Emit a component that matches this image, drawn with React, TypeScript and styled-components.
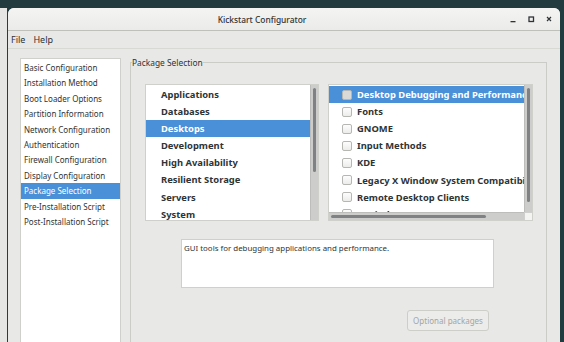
import * as React from 'react'
import styled, { createGlobalStyle, css } from 'styled-components'

const GlobalStyle = createGlobalStyle`
  html, body { margin: 0; padding: 0; height: 100%; overflow: hidden; }
  body { background: #223b3f; font-family: "Noto Sans", "DejaVu Sans", sans-serif; }
  #root { height: 100%; }
`

const Desktop = styled.div`
  display: flex;
  height: 342px;
  padding-top: 8px;
  box-sizing: border-box;
`

const BackWindow = styled.div`
  width: 7px;
  background: #e6e6e4;
  border-right: 1px solid #2d3b3d;
`

const Window = styled.div`
  flex: 1;
  display: flex;
  flex-direction: column;
  background: #e8e8e7;
  border-top-left-radius: 6px;
  border-top-right-radius: 6px;
  margin-right: 4px;
  overflow: hidden;
`

const TitleBar = styled.div`
  height: 22px;
  flex: none;
  display: flex;
  align-items: center;
  justify-content: center;
  position: relative;
  padding-right: 44px;
  background: linear-gradient(#f4f4f3, #ebebea);
  border-bottom: 1px solid #bfbfbc;
  font-size: 8.4px;
  font-weight: 500;
  color: #2e3436;
`

const Controls = styled.div`
  position: absolute;
  right: 6px;
  top: 0;
  height: 22px;
  display: flex;
  align-items: center;
  gap: 8px;
`

const ControlButton = styled.div`
  width: 10px;
  height: 10px;
  display: flex;
  align-items: center;
  justify-content: center;
`

const MenuBar = styled.div`
  height: 17px;
  flex: none;
  display: flex;
  align-items: center;
  gap: 8px;
  padding-left: 3px;
  font-size: 9px;
  color: #2e3436;
  border-bottom: 1px solid #d8d8d5;
`

const Body = styled.div`
  flex: 1;
  display: flex;
  padding: 9px 0 0 12px;
  min-height: 0;
`

const NavList = styled.div`
  width: 99px;
  flex: none;
  background: #fff;
  border: 1px solid #cfcfcc;
  border-bottom: none;
  padding-top: 1px;
  display: flex;
  flex-direction: column;
`

const NavItem = styled.div<{ $selected?: boolean }>`
  height: 15.4px;
  line-height: 15.4px;
  padding-left: 3px;
  font-size: 8px;
  color: #2e3436;
  white-space: nowrap;
  ${(p) =>
    p.$selected &&
    css`
      background: #4a90d9;
      color: #fff;
    `}
`

const Frame = styled.fieldset`
  margin: -1px 13px 0 9px;
  padding: 16px 0 0 14px;
  flex: 1;
  border: 1px solid #cbcbc8;
  border-bottom: none;
  min-width: 0;
  display: flex;
  flex-direction: column;
`

const FrameLabel = styled.legend`
  padding: 0;
  margin-left: -13px;
  font-size: 8.4px;
  color: #2e3436;
`

const ListsRow = styled.div`
  display: flex;
  gap: 9px;
`

const ListBox = styled.div<{ $width: number }>`
  width: ${(p) => p.$width}px;
  height: 137px;
  box-sizing: border-box;
  background: #fff;
  border: 1px solid #cfcfcc;
  position: relative;
  overflow: hidden;
`

const Rows = styled.div`
  padding-top: 1px;
  display: flex;
  flex-direction: column;
`

const GroupRow = styled.div<{ $selected?: boolean }>`
  height: 17.1px;
  line-height: 17.1px;
  padding-left: 15px;
  font-size: 9.4px;
  font-weight: 700;
  color: #2e3436;
  white-space: nowrap;
  margin-right: 7px;
  ${(p) =>
    p.$selected &&
    css`
      background: #4a90d9;
      color: #fff;
    `}
`

const PackageRow = styled.div<{ $selected?: boolean }>`
  height: 17.1px;
  display: flex;
  align-items: center;
  gap: 5px;
  padding-left: 13px;
  margin-right: 7px;
  font-size: 9.4px;
  font-weight: 700;
  color: #2e3436;
  white-space: nowrap;
  overflow: hidden;
  ${(p) =>
    p.$selected &&
    css`
      background: #4a90d9;
      color: #fff;
    `}
`

const CheckBox = styled.span<{ $selected?: boolean }>`
  width: 8px;
  height: 8px;
  flex: none;
  border: 1px solid #b6b6b3;
  border-radius: 2px;
  background: ${(p) => (p.$selected ? '#d9d9d7' : 'linear-gradient(#fdfdfd, #ececeb)')};
`

const VScroll = styled.div`
  position: absolute;
  top: 0;
  right: 0;
  bottom: 0;
  width: 7px;
  background: #cdcdcb;
  border-left: 1px solid #bdbdbb;
`

const HScroll = styled.div`
  position: absolute;
  left: 0;
  right: 8px;
  bottom: 0;
  height: 7px;
  background: #cdcdcb;
  border-top: 1px solid #bdbdbb;
`

const Corner = styled.div`
  position: absolute;
  right: 0;
  bottom: 0;
  width: 8px;
  height: 8px;
  background: #f4f4f3;
  border-left: 1px solid #d0d0ce;
  border-top: 1px solid #d0d0ce;
  box-sizing: border-box;
`

const Thumb = styled.div<{ $vertical?: boolean }>`
  position: absolute;
  background: #7f8283;
  border-radius: 2px;
  ${(p) =>
    p.$vertical
      ? css`
          left: 2px;
          width: 3px;
        `
      : css`
          top: 2px;
          height: 3px;
        `}
`

const Description = styled.div`
  margin: 18px 0 0 36px;
  width: 313px;
  height: 49px;
  box-sizing: border-box;
  background: #fff;
  border: 1px solid #cfcfcc;
  padding: 3px 2px;
  font-size: 7.9px;
  color: #2e3436;
`

const ButtonRow = styled.div`
  display: flex;
  margin: 22px 0 0 262px;
`

const Button = styled.button`
  width: 82px;
  height: 21px;
  padding: 0;
  border: 1px solid #cdcdca;
  border-radius: 3px;
  background: #ececeb;
  font-family: inherit;
  font-size: 8px;
  color: #a3a5a3;
`

const navItems = [
  'Basic Configuration',
  'Installation Method',
  'Boot Loader Options',
  'Partition Information',
  'Network Configuration',
  'Authentication',
  'Firewall Configuration',
  'Display Configuration',
  'Package Selection',
  'Pre-Installation Script',
  'Post-Installation Script',
]

const groups = [
  'Applications',
  'Databases',
  'Desktops',
  'Development',
  'High Availability',
  'Resilient Storage',
  'Servers',
  'System',
]

const packages = [
  'Desktop Debugging and Performance Tools',
  'Fonts',
  'GNOME',
  'Input Methods',
  'KDE',
  'Legacy X Window System Compatibility',
  'Remote Desktop Clients',
  'X Window System',
]

export default function App() {
  return (
    <>
      <GlobalStyle />
      <Desktop>
        <BackWindow />
        <Window>
          <TitleBar>
            Kickstart Configurator
            <Controls>
              <ControlButton>
                <svg width="8" height="8" viewBox="0 0 8 8">
                  <rect x="1.5" y="6" width="5" height="1.3" fill="#2e3436" />
                </svg>
              </ControlButton>
              <ControlButton>
                <svg width="8" height="8" viewBox="0 0 8 8">
                  <rect x="2" y="2" width="4.5" height="4.5" fill="none" stroke="#2e3436" strokeWidth="1.3" />
                </svg>
              </ControlButton>
              <ControlButton>
                <svg width="8" height="8" viewBox="0 0 8 8">
                  <path d="M2 2 L6 6 M6 2 L2 6" stroke="#2e3436" strokeWidth="1.2" />
                </svg>
              </ControlButton>
            </Controls>
          </TitleBar>
          <MenuBar>
            <span>File</span>
            <span>Help</span>
          </MenuBar>
          <Body>
            <NavList>
              {navItems.map((n) => (
                <NavItem key={n} $selected={n === 'Package Selection'}>
                  {n}
                </NavItem>
              ))}
            </NavList>
            <Frame>
              <FrameLabel>Package Selection</FrameLabel>
              <ListsRow>
                <ListBox $width={174}>
                  <Rows>
                    {groups.map((g) => (
                      <GroupRow key={g} $selected={g === 'Desktops'}>
                        {g}
                      </GroupRow>
                    ))}
                  </Rows>
                  <VScroll>
                    <Thumb $vertical style={{ top: 3, height: 84 }} />
                  </VScroll>
                </ListBox>
                <ListBox $width={205}>
                  <Rows>
                    {packages.map((p, i) => (
                      <PackageRow key={p} $selected={i === 0}>
                        <CheckBox $selected={i === 0} />
                        {p}
                      </PackageRow>
                    ))}
                  </Rows>
                  <VScroll style={{ bottom: 8 }}>
                    <Thumb $vertical style={{ top: 3, height: 114 }} />
                  </VScroll>
                  <HScroll>
                    <Thumb style={{ left: 2, width: 155 }} />
                  </HScroll>
                  <Corner />
                </ListBox>
              </ListsRow>
              <Description>GUI tools for debugging applications and performance.</Description>
              <ButtonRow>
                <Button disabled>Optional packages</Button>
              </ButtonRow>
            </Frame>
          </Body>
        </Window>
      </Desktop>
    </>
  )
}
